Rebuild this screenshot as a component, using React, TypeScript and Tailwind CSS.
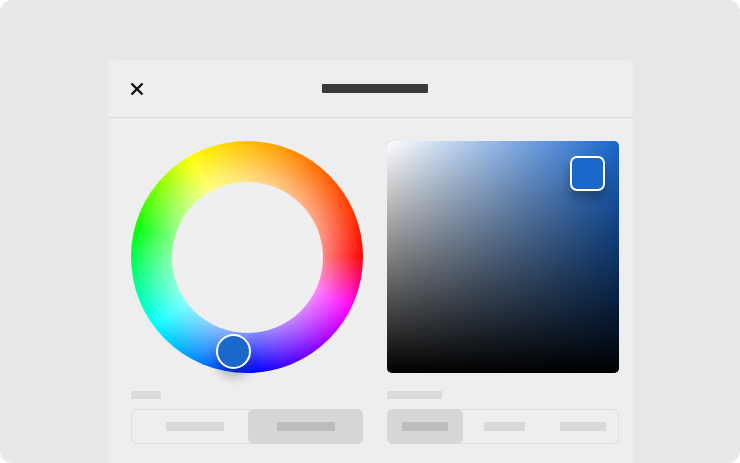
import React from "react";

export default function App() {
  return (
    <div className="w-[740px] h-[463px] bg-white overflow-hidden" style={{ fontFamily: '"Liberation Sans", sans-serif' }}>
      <div className="w-full h-full rounded-[12px] bg-[#e8e8e8] pt-[60px] pl-[108px]">
        <div className="w-[525px] h-[403px] bg-[#eeeeee] rounded-t-[6px] flex flex-col">
          {/* header */}
          <div className="h-[58px] border-b border-[#dcdcdc] flex items-center pl-[22px] shrink-0">
            <svg width="14" height="14" viewBox="0 0 14 14" className="shrink-0">
              <path d="M1.5 1.5 L12.5 12.5 M12.5 1.5 L1.5 12.5" stroke="#111" strokeWidth="2.4" strokeLinecap="butt" />
            </svg>
            <div className="ml-[178px] w-[106px] h-[9px] rounded-[1px] bg-[#3a3a3a]" />
          </div>
          {/* body */}
          <div className="flex gap-[24px] pl-[23px] pt-[23px]">
            {/* left column */}
            <div className="flex flex-col w-[232px]">
              <div className="relative w-[232px] h-[232px] rounded-full bg-[conic-gradient(from_90deg,#ff0000_0deg,#ff00ff_26deg,#0000ff_85deg,#00ffff_144deg,#00ff00_195deg,#ffff00_240deg,#ff0000_360deg)] flex items-center justify-center">
                <div className="absolute inset-0 rounded-full bg-[radial-gradient(closest-side,rgba(255,255,255,0.55)_64%,rgba(255,255,255,0)_100%)]" />
                <div className="relative w-[151px] h-[151px] rounded-full bg-[#efefef]" />
                <div className="absolute left-[85px] top-[193px] w-[35px] h-[35px] rounded-full bg-[#1a68c9] border-2 border-white shadow-[0_9px_10px_rgba(0,0,0,0.22)]" />
              </div>
              <div className="mt-[18px] w-[30px] h-[8px] bg-[#dadada]" />
              <div className="mt-[10px] h-[35px] rounded-[6px] border border-[#dddddd] flex">
                <div className="flex-1 flex items-center justify-center pl-[10px]">
                  <div className="w-[58px] h-[9px] bg-[#d9d9d9]" />
                </div>
                <div className="w-[115px] -my-px -mr-px rounded-[6px] bg-[#d6d6d6] flex items-center justify-center">
                  <div className="w-[58px] h-[9px] bg-[#bdbdbd]" />
                </div>
              </div>
            </div>
            {/* right column */}
            <div className="flex flex-col w-[232px]">
              <div className="relative w-[232px] h-[232px] rounded-[5px] bg-[#1866cc]">
                <div className="absolute inset-0 rounded-[5px] bg-[linear-gradient(to_right,#ffffff,rgba(255,255,255,0))]" />
                <div className="absolute inset-0 rounded-[5px] bg-[linear-gradient(to_top,#000000,rgba(0,0,0,0))]" />
                <div className="absolute left-[183px] top-[15px] w-[35px] h-[35px] rounded-[7px] bg-[#1a68c9] border-2 border-white shadow-[0_8px_10px_rgba(0,0,0,0.25)]" />
              </div>
              <div className="mt-[18px] w-[55px] h-[8px] bg-[#dadada]" />
              <div className="mt-[10px] h-[35px] rounded-[6px] border border-[#dddddd] flex">
                <div className="w-[76px] -my-px -ml-px rounded-[6px] bg-[#d6d6d6] flex items-center justify-center">
                  <div className="w-[46px] h-[9px] bg-[#bdbdbd]" />
                </div>
                <div className="w-[79px] flex items-center justify-center pl-[4px]">
                  <div className="w-[41px] h-[9px] bg-[#d9d9d9]" />
                </div>
                <div className="flex-1 flex items-center justify-center pl-[6px]">
                  <div className="w-[46px] h-[9px] bg-[#d9d9d9]" />
                </div>
              </div>
            </div>
          </div>
        </div>
      </div>
    </div>
  );
}
